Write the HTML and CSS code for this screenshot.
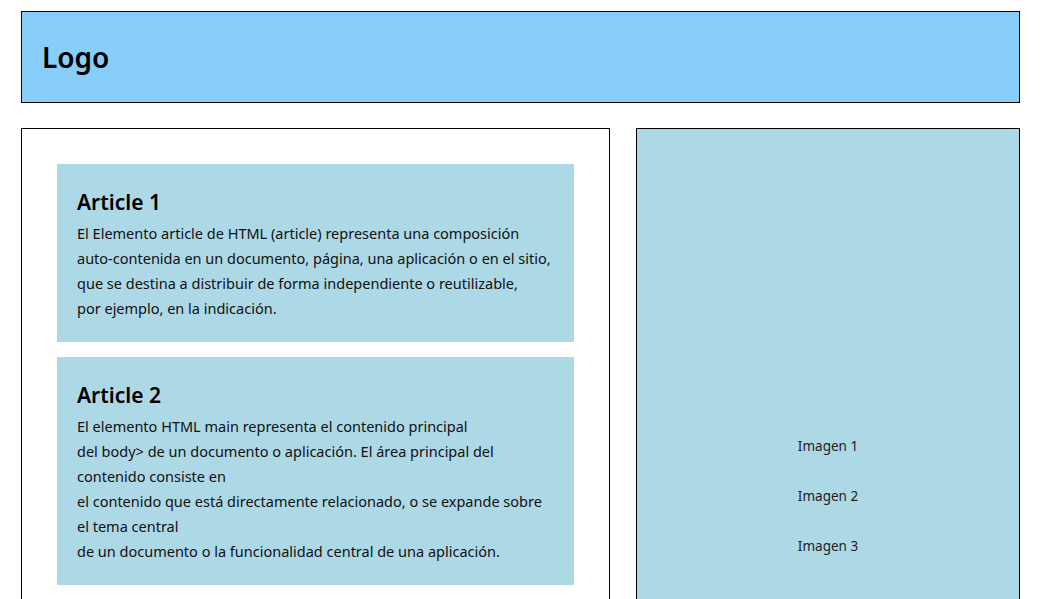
FILE: index.html
```html
<!DOCTYPE html>
<html lang="es">
<head>
<meta charset="utf-8">
<title>Layout</title>
<link rel="stylesheet" href="styles.css">
</head>
<body>
<div class="page">
  <header class="site-header">
    <h1 class="logo">Logo</h1>
  </header>
  <div class="content">
    <main class="main">
      <article class="article">
        <h2 class="article-title">Article 1</h2>
        <p class="article-text">El Elemento article de HTML (article) representa una composición<br>auto-contenida en un documento, página, una aplicación o en el sitio,<br>que se destina a distribuir de forma independiente o reutilizable,<br>por ejemplo, en la indicación.</p>
      </article>
      <article class="article">
        <h2 class="article-title">Article 2</h2>
        <p class="article-text">El elemento HTML main representa el contenido principal<br>del body&gt; de un documento o aplicación. El área principal del<br>contenido consiste en<br>el contenido que está directamente relacionado, o se expande sobre<br>el tema central<br>de un documento o la funcionalidad central de una aplicación.</p>
      </article>
    </main>
    <aside class="aside">
      <div class="image-item">Imagen 1</div>
      <div class="image-item">Imagen 2</div>
      <div class="image-item">Imagen 3</div>
    </aside>
  </div>
</div>
</body>
</html>
```

FILE: styles.css
```css
* { box-sizing: border-box; }
html, body { margin: 0; padding: 0; background: #fff; }
body {
  font-family: "Noto Sans", "Open Sans", sans-serif;
  color: #111;
}
.page {
  width: 999px;
  margin: 11px 0 0 21px;
}
.site-header {
  height: 92px;
  background: #87cefa;
  border: 1px solid #000;
  display: flex;
  align-items: center;
  padding-left: 20px;
}
.logo {
  margin: 0;
  font-size: 28px;
  font-weight: 600;
  line-height: 1;
  color: #000;
}
.content {
  display: flex;
  gap: 26px;
  margin-top: 25px;
}
.main {
  width: 589px;
  border: 1px solid #000;
  padding: 35px 35px 36px;
  display: flex;
  flex-direction: column;
  gap: 15px;
}
.article {
  background: #add8e6;
  padding: 20px 20px 22px;
}
.article-title {
  margin: 0;
  font-size: 21px;
  font-weight: 600;
  line-height: 36px;
  color: #000;
}
.article-text {
  margin: 0;
  padding-top: 1px;
  margin-bottom: -1px;
  font-size: 14.5px;
  line-height: 25px;
  white-space: nowrap;
}
.aside {
  flex: 1;
  background: #add8e6;
  border: 1px solid #000;
  padding-top: 292px;
  display: flex;
  flex-direction: column;
  align-items: center;
}
.image-item {
  height: 50px;
  line-height: 50px;
  font-size: 13.5px;
  color: #222;
}
```
